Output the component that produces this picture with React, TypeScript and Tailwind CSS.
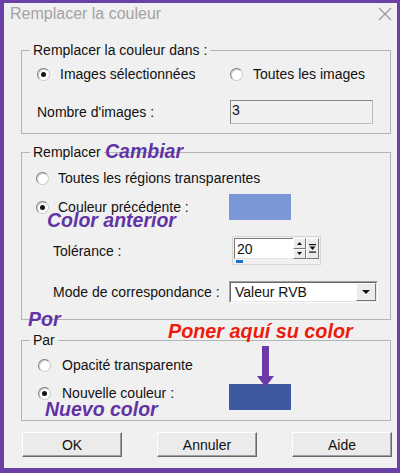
import React from "react";

function Radio({ checked }: { checked?: boolean }) {
  return (
    <span className="flex h-[13px] w-[13px] shrink-0 items-center justify-center rounded-full border border-[#c9c9c9] border-l-[#7d7d7d] border-t-[#7d7d7d] bg-white shadow-[inset_1px_1px_1px_rgba(0,0,0,0.18)]">
      {checked && <span className="h-[5px] w-[5px] rounded-full bg-[#151515]" />}
    </span>
  );
}

function RadioLabel({ checked, label, gap = "gap-[10px]" }: { checked?: boolean; label: string; gap?: string }) {
  return (
    <div className={`flex h-[16px] items-center ${gap}`}>
      <Radio checked={checked} />
      <span className="leading-[16px]">{label}</span>
    </div>
  );
}

function Legend({ children }: { children: React.ReactNode }) {
  return <legend className="ml-[8px] px-[3px] leading-[16px]">{children}</legend>;
}

function Tri({ up }: { up?: boolean }) {
  return (
    <svg width="5" height="3" viewBox="0 0 5 3">
      <polygon points={up ? "2.5,0 5,3 0,3" : "0,0 5,0 2.5,3"} fill="#111" />
    </svg>
  );
}

const raised =
  "border border-t-white border-l-white border-r-[#7a7a7a] border-b-[#7a7a7a] bg-[#ececec]";

export default function App() {
  return (
    <div className="h-[473px] w-[400px] bg-[#6a3fa6] pb-[5px] pl-[4px] pr-[3px] pt-[3px] font-['Liberation_Sans',Arial,sans-serif] text-[14px] text-[#111]">
      <div className="relative flex h-full flex-col bg-[#f0f0f0]">
        {/* Title bar */}
        <div className="flex h-[22px] items-center justify-between pl-[6px] pr-[5px]">
          <span className="text-[16px] leading-[22px] text-[#a3a3a3]">Remplacer la couleur</span>
          <svg width="14" height="14" viewBox="0 0 14 14">
            <path d="M1 1 L13 13 M13 1 L1 13" stroke="#9a9a9a" strokeWidth="1.2" />
          </svg>
        </div>

        {/* Group 1 */}
        <fieldset className="ml-[17px] mt-[17px] w-[370px] border border-[#b4b4b4] pb-[9px]">
          <Legend>Remplacer la couleur dans :</Legend>
          <div className="grid grid-cols-[193px_1fr] pl-[15px] pt-[8px]">
            <RadioLabel checked label="Images sélectionnées" />
            <RadioLabel label="Toutes les images" />
          </div>
          <div className="mt-[18px] grid grid-cols-[193px_1fr] items-center pl-[15px]">
            <span className="leading-[16px]">Nombre d'images :</span>
            <div className="h-[24px] w-[143px] border border-[#bdbdbd] border-l-[#8a8a8a] border-t-[#8a8a8a] pl-[1px] pt-[1px] leading-[16px]">
              3
            </div>
          </div>
        </fieldset>

        {/* Group 2 */}
        <fieldset className="ml-[17px] mt-[10px] w-[370px] border border-[#b4b4b4] pb-[16px]">
          <Legend>Remplacer</Legend>
          <div className="pl-[14px] pt-[10px]">
            <RadioLabel label="Toutes les régions transparentes" gap="gap-[9px]" />
          </div>
          <div className="mt-[8px] grid grid-cols-[193px_1fr] items-center pl-[14px]">
            <RadioLabel checked label="Couleur précédente :" gap="gap-[9px]" />
            <div className="h-[26px] w-[62px] bg-[#7b97d7]" />
          </div>
          <div className="mt-[16px] grid grid-cols-[193px_1fr] items-center pl-[14px]">
            <span className="ml-[17px] leading-[16px]">Tolérance :</span>
            <div className="ml-[3px] flex h-[29px] w-[89px] flex-col border border-[#d6d6d6] bg-[#f0f0f0] p-[1px]">
              <div className="flex h-[21px]">
                <div className="flex w-[60px] items-center border border-r-0 border-[#e3e3e3] border-l-[#7a7a7a] border-t-[#7a7a7a] bg-white pl-[2px] leading-[16px]">
                  20
                </div>
                <div className="flex w-[14px] flex-col">
                  <div className={`flex h-1/2 items-center justify-center ${raised}`}>
                    <Tri up />
                  </div>
                  <div className={`flex h-1/2 items-center justify-center ${raised}`}>
                    <Tri />
                  </div>
                </div>
                <div className={`flex w-[13px] items-center justify-center ${raised}`}>
                  <svg width="7" height="9" viewBox="0 0 7 9">
                    <rect x="0" y="0" width="7" height="1.2" fill="#111" />
                    <polygon points="0.5,2.5 6.5,2.5 3.5,6" fill="#111" />
                    <rect x="0" y="7.5" width="7" height="1.2" fill="#111" />
                  </svg>
                </div>
              </div>
              <div className="flex-1 pl-[2px] pt-[1px]">
                <div className="h-[3px] w-[7px] bg-[#1f6fd1]" />
              </div>
            </div>
          </div>
          <div className="mt-[16px] grid grid-cols-[193px_1fr] items-center pl-[14px]">
            <span className="ml-[17px] leading-[16px]">Mode de correspondance :</span>
            <div className="flex h-[22px] w-[149px] border border-[#ffffff] border-l-[#a0a0a0] border-t-[#a0a0a0]">
              <div className="flex flex-1 border border-[#e3e3e3] border-l-[#696969] border-t-[#696969] bg-white">
                <span className="flex flex-1 items-center pl-[4px] leading-[16px]">Valeur RVB</span>
                <div className={`flex w-[20px] items-center justify-center ${raised}`}>
                  <svg width="8" height="4" viewBox="0 0 8 4">
                    <polygon points="0,0 8,0 4,4" fill="#111" />
                  </svg>
                </div>
              </div>
            </div>
          </div>
        </fieldset>

        {/* Group 3 */}
        <fieldset className="ml-[17px] mt-[12px] w-[370px] border border-[#b4b4b4] pb-[10px]">
          <Legend>Par</Legend>
          <div className="pl-[16px] pt-[9px]">
            <RadioLabel label="Opacité transparente" gap="gap-[11px]" />
          </div>
          <div className="mt-[11px] grid grid-cols-[191px_1fr] items-start pl-[16px]">
            <div className="mt-[1px]">
              <RadioLabel checked label="Nouvelle couleur :" gap="gap-[11px]" />
            </div>
            <div className="h-[26px] w-[62px] bg-[#3e59a0]" />
          </div>
        </fieldset>

        {/* Buttons */}
        <div className="ml-[18px] mt-[11px] flex gap-[35px]">
          {["OK", "Annuler", "Aide"].map((t) => (
            <button
              key={t}
              className="flex h-[25px] w-[100px] items-center justify-center border border-t-white border-l-white border-r-[#696969] border-b-[#696969] bg-[#ebebeb] leading-[16px] shadow-[inset_-1px_-1px_0_#a0a0a0]"
            >
              {t}
            </button>
          ))}
        </div>

        {/* Annotations overlay */}
        <span className="absolute left-[101px] top-[139px] text-[19.5px] font-bold italic leading-none text-[#6233a6]">
          Cambiar
        </span>
        <span className="absolute left-[43px] top-[208px] text-[19.5px] font-bold italic leading-none text-[#6233a6]">
          Color anterior
        </span>
        <span className="absolute left-[24px] top-[307px] text-[19.5px] font-bold italic leading-none text-[#6233a6]">
          Por
        </span>
        <span className="absolute left-[164px] top-[319px] text-[19.8px] font-bold italic leading-none text-[#ec1c0c]">
          Poner aquí su color
        </span>
        <span className="absolute left-[41px] top-[397px] text-[19.5px] font-bold italic leading-none text-[#6233a6]">
          Nuevo color
        </span>
        <svg className="absolute left-[253px] top-[343px]" width="17" height="41" viewBox="0 0 17 41">
          <rect x="5" y="0" width="7" height="31" fill="#6a3aa6" />
          <polygon points="0,30 17,30 8.5,41" fill="#6a3aa6" />
        </svg>
      </div>
    </div>
  );
}
